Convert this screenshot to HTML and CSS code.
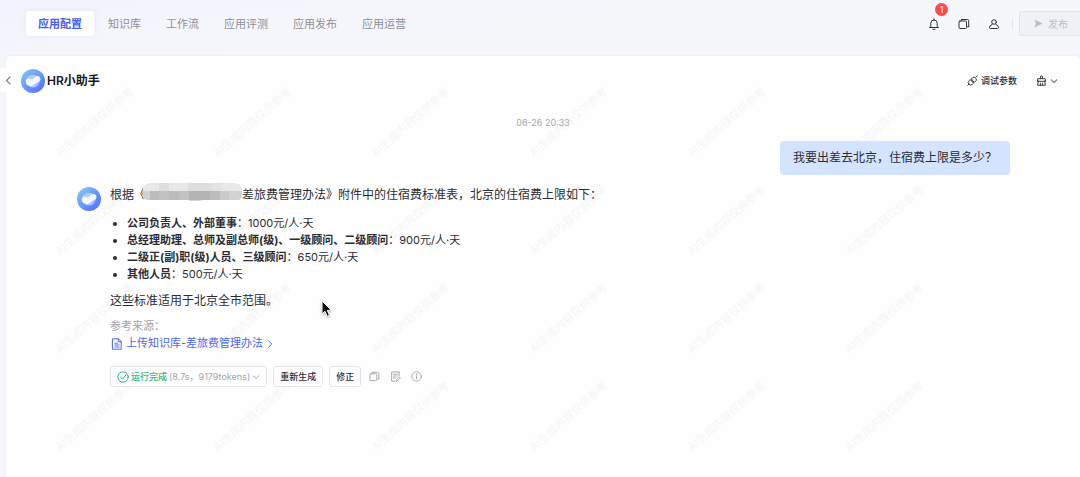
FILE: index.html
```html
<!DOCTYPE html>
<html lang="zh-CN">
<head>
<meta charset="utf-8">
<meta name="viewport" content="width=device-width, initial-scale=1">
<title>HR小助手</title>
<link rel="stylesheet" href="styles.css">
</head>
<body>
<svg class="defs" aria-hidden="true">
  <defs>
    <linearGradient id="ball" x1="0.1" y1="0.1" x2="0.85" y2="0.9">
      <stop offset="0" stop-color="#7cc4f6"/><stop offset="0.5" stop-color="#6b9bfa"/><stop offset="1" stop-color="#5573fb"/>
    </linearGradient>
    <linearGradient id="upper" x1="0" y1="0.2" x2="1" y2="0.8">
      <stop offset="0" stop-color="#a5cdfb"/><stop offset="0.6" stop-color="#d9e6fe"/><stop offset="1" stop-color="#ffffff"/>
    </linearGradient>
    <linearGradient id="lower" x1="0" y1="0.4" x2="1" y2="0.6">
      <stop offset="0" stop-color="#ffffff"/><stop offset="0.5" stop-color="#e3ebfe"/><stop offset="1" stop-color="#a3bdfc"/>
    </linearGradient>
    <symbol id="logo" viewBox="0 0 24 24">
      <circle cx="12" cy="12" r="12" fill="url(#ball)"/>
      <path d="M5.200 10.600c.6-2.900 3.300-4.800 6.300-4.800 1.900 0 3.700.7 5 1.800 1.200 1 .8 2.900-.7 3.700l-4 1.900z" fill="url(#upper)" opacity="0.750"/>
      <path d="M18.700 12.400c-.3 3.300-3 5.900-6.500 5.900-1.900 0-3.500-.7-4.800-1.900l4.400-3.200z" fill="url(#lower)" opacity="0.650"/>
      <path d="M4.700 12.600c0-1.900 1.200-3.200 2.800-3.200 1.500 0 2.300 1.300 3.700 1.200 1.900-.1 2.900-3.500 5.400-3.500 1.700 0 2.800 1.500 2.800 3.200 0 2.500-2.400 2.700-4.400 4-1.800 1.200-3.200 2.700-5.700 2.700-2.700 0-4.600-1.900-4.600-4.400z" fill="#f5f8ff"/>
    </symbol>
    <symbol id="copy" viewBox="0 0 12 12">
      <rect x="1" y="3" width="7.500" height="7.500" rx="1"/><path d="M3.500 1.500h6a1.200 1.200 0 0 1 1.200 1.200v6M3.500 1.500v1M10.700 8.700h-1"/>
    </symbol>
    <symbol id="down" viewBox="0 0 8 8"><path d="M1.200 2.800 4 5.500l2.800-2.700"/></symbol>
  </defs>
</svg>

<header class="topbar">
  <nav class="tabs">
    <a class="tab tab-active" href="#config">应用配置</a>
    <a class="tab" href="#kb">知识库</a>
    <a class="tab" href="#flow">工作流</a>
    <a class="tab" href="#eval">应用评测</a>
    <a class="tab" href="#release">应用发布</a>
    <a class="tab" href="#ops">应用运营</a>
  </nav>
  <div class="tools">
    <button class="icon-btn" aria-label="通知">
      <svg class="line" viewBox="0 0 12 12"><path d="M1.500 9.500h9M2.800 9.500V5.200a3.200 3.200 0 0 1 6.400 0v4.300M6 2V.8M5 11.300h2"/></svg>
      <span class="badge">1</span>
    </button>
    <button class="icon-btn" aria-label="复制"><svg class="line"><use href="#copy"/></svg></button>
    <button class="icon-btn" aria-label="账户">
      <svg class="line" viewBox="0 0 12 12"><circle cx="6" cy="4" r="2.300"/><path d="M4.500 6.200C4.300 7.300 1.600 7 1.500 9.300q0 1.200 1 1.200h7q1 0 1-1.200C10.400 7 7.700 7.300 7.500 6.200"/></svg>
    </button>
    <span class="divider"></span>
    <button class="publish" disabled>
      <svg viewBox="0 0 10 10"><path d="M.5.500 9.500 5 .5 9.500 2.300 5z" fill="#b9bcc6"/></svg>发布
    </button>
  </div>
</header>

<main class="panel">
  <div class="watermarks" aria-hidden="true">
    <span>AI生成内容仅供参考</span><span>AI生成内容仅供参考</span><span>AI生成内容仅供参考</span><span>AI生成内容仅供参考</span><span>AI生成内容仅供参考</span><span>AI生成内容仅供参考</span>
    <span>AI生成内容仅供参考</span><span>AI生成内容仅供参考</span><span>AI生成内容仅供参考</span><span>AI生成内容仅供参考</span><span>AI生成内容仅供参考</span><span>AI生成内容仅供参考</span>
    <span>AI生成内容仅供参考</span><span>AI生成内容仅供参考</span><span>AI生成内容仅供参考</span><span>AI生成内容仅供参考</span><span>AI生成内容仅供参考</span><span>AI生成内容仅供参考</span>
    <span>AI生成内容仅供参考</span><span>AI生成内容仅供参考</span><span>AI生成内容仅供参考</span><span>AI生成内容仅供参考</span><span>AI生成内容仅供参考</span><span>AI生成内容仅供参考</span>
  </div>
  <button class="collapse" aria-label="收起">
    <svg class="line" viewBox="0 0 8 8"><path d="M5.500.700 2.200 4l3.300 3.300"/></svg>
  </button>

  <div class="panel-head">
    <svg class="logo"><use href="#logo"/></svg>
    <h1 class="title">HR小助手</h1>
    <div class="panel-actions">
      <button class="text-btn">
        <svg class="line" viewBox="0 0 12 12"><path d="M4.800 4.300 6.500 2.600a2.700 2.700 0 0 1 3.500 3.500L8.300 7.800zM9.800 2.200l1.400-1.400M3.800 5.300l3.500 3.500-1.500 1.400a2.600 2.600 0 0 1-3.700-3.700zM2.200 9.800.8 11.200M4.800 6.300l1.100-1.100M6.400 7.900l1.100-1.100"/></svg>调试参数
      </button>
      <button class="text-btn clear" aria-label="清理">
        <svg class="line" viewBox="0 0 12 12"><path d="M5 4V1.200q1-.7 2 0V4M1.500 6.500 2 4h8l.5 2.500zM2.500 6.500l-.7 4.700h8.400l-.7-4.700M4.800 11V9M7.200 11V9"/></svg>
        <svg class="line chevron"><use href="#down"/></svg>
      </button>
    </div>
  </div>

  <time class="date">06-26 20:33</time>

  <div class="question">我要出差去北京，住宿费上限是多少？</div>

  <article class="answer">
    <svg class="logo"><use href="#logo"/></svg>
    <div class="answer-body">
      <p>根据《<svg class="mosaic" viewBox="0 0 99 18" role="img" aria-label="已隐藏">
        <defs><clipPath id="soft"><path d="M8 0h83q8 0 8 7v5q0 5-5 5H60q-8 1-16 0H6q-6 0-6-6V7q0-7 8-7z"/></clipPath></defs>
        <g clip-path="url(#soft)">
          <rect width="99" height="18" fill="#e8e8e9"/>
          <path fill="#dededf" d="M16 0h10v8H16zM45 0h24v8H45z"/><path fill="#e3e3e4" d="M69 0h10v8H69z"/>
          <path fill="#d2d2d3" d="M0 8h7v10H0zM77 8h22v10H77z"/><path fill="#bcbcbe" d="M7 8h9v10H7zM26 8h10v10H26zM67 8h10v10H67z"/>
          <path fill="#c2c2c4" d="M16 8h10v10H16zM36 8h10v10H36z"/><path fill="#b4b4b6" d="M46 8h21v10H46z"/><path fill="#cacacb" d="M77 8h9v10h-9z"/>
        </g>
      </svg>差旅费管理办法》附件中的住宿费标准表，北京的住宿费上限如下：</p>
      <ul>
        <li><b>公司负责人、外部董事</b>：1000元/人·天</li>
        <li><b>总经理助理、总师及副总师(级)、一级顾问、二级顾问</b>：900元/人·天</li>
        <li><b>二级正(副)职(级)人员、三级顾问</b>：650元/人·天</li>
        <li><b>其他人员</b>：500元/人·天</li>
      </ul>
      <p>这些标准适用于北京全市范围。</p>
      <div class="sources">
        <span>参考来源：</span>
        <a class="source" href="#source">
          <svg class="line" viewBox="0 0 12 12"><path d="M1.800.800h5.700l2.700 2.700v7.700H1.800zM7.300.800v3h2.900M4 5.200h2.500M4 7h4M4 9h4"/></svg>上传知识库-差旅费管理办法<svg class="line next" viewBox="0 0 8 8"><path d="M2.500.700 5.800 4 2.500 7.300"/></svg>
        </a>
      </div>
      <div class="actions">
        <button class="btn status">
          <svg class="line" viewBox="0 0 12 12"><circle cx="6" cy="6" r="5.200"/><path d="m3.500 6.200 1.900 1.800 3.300-3.700"/></svg>
          <span class="done">运行完成</span><span>(8.7s，9179tokens)</span>
          <svg class="line chevron"><use href="#down"/></svg>
        </button>
        <button class="btn">重新生成</button>
        <button class="btn">修正</button>
        <div class="mini-tools">
          <button class="icon-btn" aria-label="复制回答"><svg class="line" viewBox="0 0 12 12"><use href="#copy"/></svg></button>
          <button class="icon-btn" aria-label="编辑">
            <svg class="line" viewBox="0 0 12 12"><path d="M10 5V1H1.800v10h3.500M3.800 3.500H8M3.800 5.500H8M3.800 7.500h2M6.800 11l.3-1.700L10 6.400l1.300 1.300-2.900 2.900z"/></svg>
          </button>
          <button class="icon-btn" aria-label="信息">
            <svg class="line" viewBox="0 0 12 12"><circle cx="6" cy="6" r="5.200"/><path d="M6 5.200v3.500M6 3v1"/></svg>
          </button>
        </div>
      </div>
    </div>
  </article>

  <svg class="cursor" viewBox="0 0 12 18" aria-hidden="true"><path d="M1 1v13l3-2.700 2.200 5 2.300-1-2.200-4.900h4.200z" fill="#0b0b0b" stroke="#fff"/></svg>
</main>
</body>
</html>
```
FILE: styles.css
```css
* { box-sizing: border-box; }

body {
  margin: 0;
  min-height: 100vh;
  display: flex;
  flex-direction: column;
  background: linear-gradient(172deg, #f0f2fd 0, #f5f6fc 50px, #f6f7fa 110px);
  color: #2b2d33;
  font: 12px/16px Inter, "Noto Sans CJK SC", sans-serif;
}

.defs { position: absolute; width: 0; height: 0; }

button {
  margin: 0;
  padding: 0;
  border: 0;
  background: none;
  color: inherit;
  font: inherit;
}

a { color: inherit; text-decoration: none; }
p, ul, h1 { margin: 0; }

.line {
  width: 12px;
  height: 12px;
  flex: none;
  fill: none;
  stroke: currentColor;
  stroke-linecap: round;
  stroke-linejoin: round;
}

/* Top bar */
.topbar {
  display: flex;
  justify-content: space-between;
  height: 56px;
  padding: 11px 0 20px 26px;
}

.tabs {
  display: flex;
  gap: 3px;
  font-size: 11px;
  color: #8d909d;
}

.tab {
  display: flex;
  align-items: center;
  padding: 0 11px;
  border-radius: 4px;
}

.tab-active {
  padding: 0 12px;
  background: #fff;
  color: #4262ee;
  font-weight: 700;
  box-shadow: 0 0 6px #e6e8f3;
}

.tools {
  display: flex;
  align-items: center;
  gap: 18px;
  color: #33353d;
}

.icon-btn { position: relative; display: flex; }

.badge {
  position: absolute;
  left: 7px;
  top: -15px;
  width: 13px;
  height: 13px;
  border-radius: 50%;
  background: #fb4a50;
  color: #fff;
  font-size: 9px;
  line-height: 13px;
  text-align: center;
}

.divider {
  width: 1px;
  height: 12px;
  margin: 0 -12px 0 -6px;
  background: #e6e7ec;
}

.publish {
  display: flex;
  align-items: center;
  gap: 5px;
  height: 25px;
  padding: 0 12px 0 14px;
  border: 1px solid #e3e4ea;
  border-right: 0;
  border-radius: 3px 0 0 3px;
  background: #f0f1f5;
  color: #bdc0c9;
  font-size: 10px;
}

.publish svg { width: 9px; height: 9px; }

/* Chat panel */
.panel {
  position: relative;
  z-index: 0;
  flex: 1;
  display: flex;
  flex-direction: column;
  margin-left: 6px;
  padding: 12px 70px 20px 15px;
  border-radius: 5px 5px 0 0;
  background: #fefefe;
  box-shadow: 0 0 3px #e7e8ed;
}

.watermarks {
  position: absolute;
  z-index: -1;
  inset: 17px 0 0 9px;
  display: grid;
  grid-template-columns: repeat(6, 158px);
  grid-auto-rows: 98px;
  place-items: center;
  align-content: start;
  overflow: hidden;
  color: #f5f5f6;
  font-size: 11px;
}

.watermarks span { transform: rotate(-41deg); white-space: nowrap; }

.collapse {
  position: absolute;
  left: -6px;
  top: 12px;
  display: flex;
  align-items: center;
  width: 12px;
  height: 24px;
  padding-left: 4px;
  border-radius: 4px 0 0 4px;
  background: #fff;
  color: #777a83;
}

.collapse svg { width: 9px; height: 9px; }

.panel-head {
  display: flex;
  align-items: center;
  gap: 2px;
  height: 25px;
  margin-right: -48px;
}

.logo { width: 24px; height: 24px; flex: none; }
.title { font-size: 12px; font-weight: 600; color: #17181c; }

.panel-actions {
  display: flex;
  gap: 19px;
  margin-left: auto;
}

.text-btn {
  display: flex;
  align-items: center;
  gap: 3px;
  font-size: 9px;
  font-weight: 500;
}

.text-btn .line { width: 11px; height: 11px; }
.text-btn .chevron, .chevron { width: 8px; height: 8px; }

.date {
  margin: 22px -55px 10px 0;
  align-self: center;
  color: #a5a7ad;
  font-size: 9px;
}

.question {
  align-self: flex-end;
  padding: 9px 13px;
  border-radius: 4px;
  background: #d4e3fe;
}

.answer {
  display: flex;
  gap: 9px;
  margin: 12px 0 0 56px;
}

.answer-body { flex: 1; }

.mosaic {
  width: 99px;
  height: 18px;
  margin: -4px 0 0 -3px;
  vertical-align: -2px;
}

.answer ul {
  margin: 12px 0 10px;
  padding-left: 17px;
  font-size: 11px;
  line-height: 17px;
}

.answer b { font-weight: 700; }

.sources {
  display: flex;
  flex-direction: column;
  align-items: flex-start;
  margin-top: 9px;
  color: #a2a4aa;
  font-size: 11px;
  line-height: 17px;
}

.source {
  display: flex;
  align-items: center;
  gap: 3px;
  padding-left: 1px;
  color: #4969e6;
}

.source .next { width: 8px; height: 8px; }

.actions {
  display: flex;
  gap: 6px;
  margin-top: 14px;
  font-size: 9px;
}

.btn {
  display: flex;
  align-items: center;
  gap: 2px;
  height: 21px;
  padding: 0 6px;
  border: 1px solid #e4e5e8;
  border-radius: 3px;
  background: #fff;
  font-weight: 500;
}

.status { color: #a2a4aa; font-weight: 400; }
.status .line:first-child { color: #2db783; }
.done { color: #2db783; font-weight: 500; }

.mini-tools {
  display: flex;
  align-items: center;
  gap: 10px;
  margin-left: 2px;
  color: #a3a5ac;
}

.mini-tools .line { width: 11px; height: 11px; }

.cursor {
  position: absolute;
  left: 315px;
  top: 244px;
  width: 12px;
  height: 18px;
  filter: drop-shadow(0 1px 1px #0005);
}
```
